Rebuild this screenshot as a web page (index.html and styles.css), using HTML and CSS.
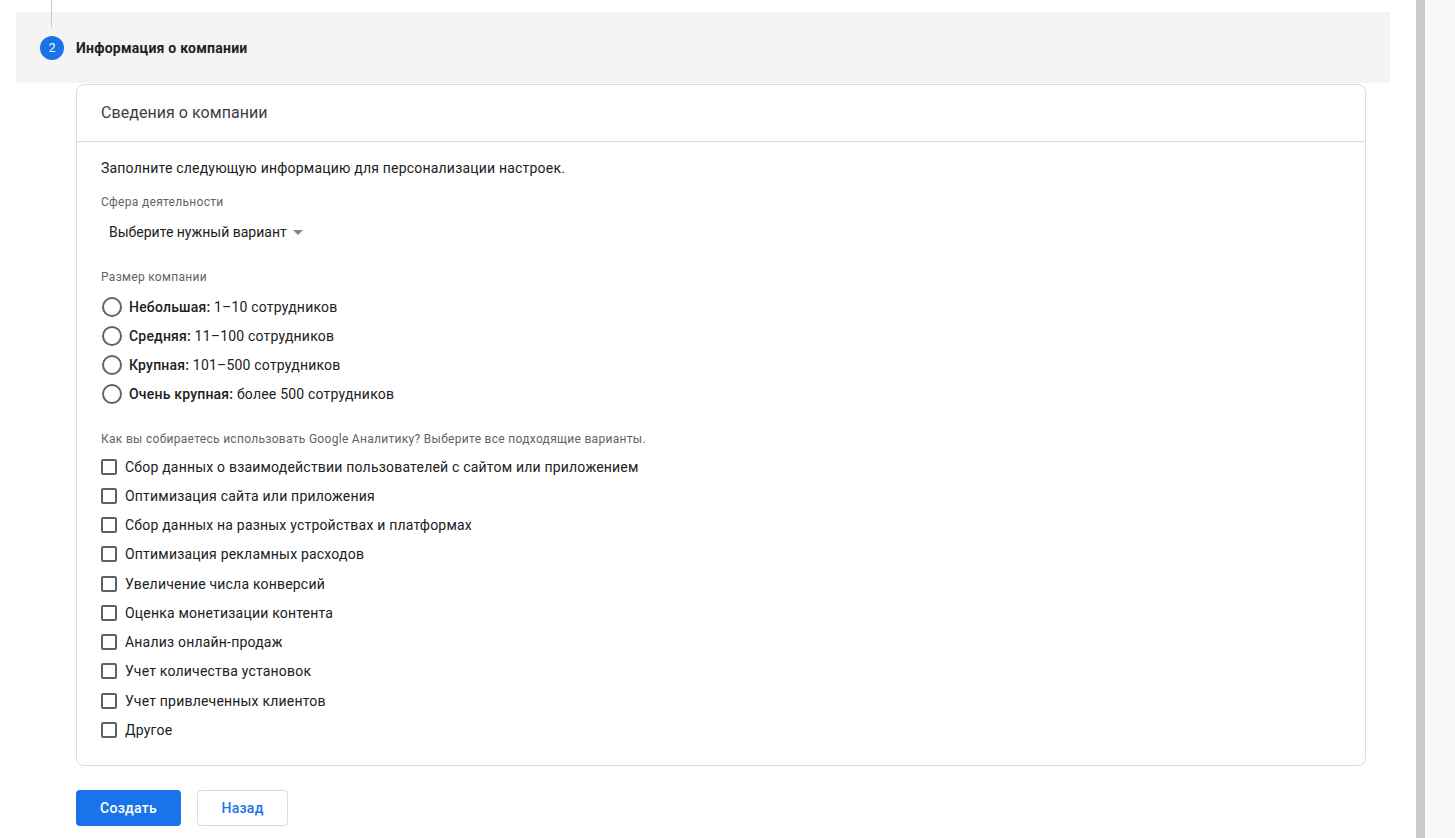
FILE: index.html
```html
<!DOCTYPE html>
<html lang="ru">
<head>
<meta charset="utf-8">
<title>Информация о компании</title>
<link rel="stylesheet" href="styles.css">
</head>
<body>
<div class="layout">
  <main class="main">
    <div class="step-connector"></div>
    <div class="step-header">
      <span class="step-num">2</span>
      <span class="step-title">Информация о компании</span>
    </div>
    <section class="card">
      <div class="card-head">Сведения о компании</div>
      <div class="card-body">
        <p class="intro">Заполните следующую информацию для персонализации настроек.</p>
        <div class="label label-industry">Сфера деятельности</div>
        <div class="select">Выберите нужный вариант <span class="arrow"></span></div>

        <div class="label label-size">Размер компании</div>
        <div class="radios">
          <label class="radio-row"><span class="radio"></span><span><b>Небольшая:</b> 1–10 сотрудников</span></label>
          <label class="radio-row"><span class="radio"></span><span><b>Средняя:</b> 11–100 сотрудников</span></label>
          <label class="radio-row"><span class="radio"></span><span><b>Крупная:</b> 101–500 сотрудников</span></label>
          <label class="radio-row"><span class="radio"></span><span><b>Очень крупная:</b> более 500 сотрудников</span></label>
        </div>

        <div class="label label-use">Как вы собираетесь использовать Google Аналитику? Выберите все подходящие варианты.</div>
        <div class="checks">
          <label class="check-row"><span class="box"></span>Сбор данных о взаимодействии пользователей с сайтом или приложением</label>
          <label class="check-row"><span class="box"></span>Оптимизация сайта или приложения</label>
          <label class="check-row"><span class="box"></span>Сбор данных на разных устройствах и платформах</label>
          <label class="check-row"><span class="box"></span>Оптимизация рекламных расходов</label>
          <label class="check-row"><span class="box"></span>Увеличение числа конверсий</label>
          <label class="check-row"><span class="box"></span>Оценка монетизации контента</label>
          <label class="check-row"><span class="box"></span>Анализ онлайн-продаж</label>
          <label class="check-row"><span class="box"></span>Учет количества установок</label>
          <label class="check-row"><span class="box"></span>Учет привлеченных клиентов</label>
          <label class="check-row"><span class="box"></span>Другое</label>
        </div>
      </div>
    </section>
    <div class="actions">
      <button class="btn btn-primary">Создать</button>
      <button class="btn btn-secondary">Назад</button>
    </div>
  </main>
  <div class="divider"></div>
  <aside class="side"></aside>
</div>
</body>
</html>
```
FILE: styles.css
```css
* { box-sizing: border-box; }
html, body { margin: 0; padding: 0; }
body {
  font-family: Roboto, "Noto Sans", Arial, sans-serif;
  color: #202124;
  background: #fff;
  overflow: hidden;
}
.layout {
  display: flex;
  height: 838px;
}
.main {
  width: 1416px;
  padding: 0 26px 0 16px;
}
.step-connector {
  width: 1px;
  height: 12px;
  margin-left: 35px;
  background: #c8c8c8;
}
.step-header {
  position: relative;
  height: 71px;
  background: #f4f4f4;
  display: flex;
  align-items: center;
  padding-left: 24px;
}
.step-header::before {
  content: "";
  position: absolute;
  left: 35px;
  top: 0;
  width: 1px;
  height: 15px;
  background: #c8c8c8;
}
.step-num {
  width: 24px;
  height: 24px;
  border-radius: 50%;
  background: #1a73e8;
  color: #fff;
  font-size: 12px;
  display: flex;
  align-items: center;
  justify-content: center;
  margin-right: 12px;
}
.step-title {
  font-size: 14px;
  font-weight: 700;
  color: #202124;
  letter-spacing: 0.25px;
}
.card {
  margin: 1px 24px 0 60px;
  border: 1px solid #dadce0;
  border-radius: 8px;
}
.card-head {
  height: 57px;
  padding-left: 24px;
  display: flex;
  align-items: center;
  font-size: 16px;
  color: #3c4043;
  border-bottom: 1px solid #dadce0;
  padding-bottom: 1px;
  letter-spacing: 0.05px;
}
.card-body {
  padding: 16px 24px 20px 24px;
}
.intro {
  margin: 0;
  font-size: 14px;
  line-height: 20px;
  color: #202124;
  letter-spacing: 0.2px;
}
.label {
  font-size: 12px;
  line-height: 16px;
  color: #5f6368;
  letter-spacing: 0.3px;
}
.label-industry { margin-top: 16px; }
.select {
  margin-top: 12px;
  padding-left: 8px;
  font-size: 14px;
  line-height: 20px;
  color: #202124;
  display: flex;
  align-items: center;
}
.arrow {
  display: inline-block;
  width: 0;
  height: 0;
  margin-left: 6px;
  border-left: 5px solid transparent;
  border-right: 5px solid transparent;
  border-top: 5px solid #80868b;
}
.label-size { margin-top: 27px; }
.radios { margin-top: 7px; }
.radio-row {
  display: flex;
  align-items: center;
  height: 29px;
  font-size: 14px;
  color: #202124;
  letter-spacing: 0.2px;
}
.radio-row b { font-weight: 500; }
.radio {
  width: 20px;
  height: 20px;
  border: 2px solid #5f6368;
  border-radius: 50%;
  margin: 0 7px 0 1px;
  flex: none;
}
.label-use { margin-top: 23px; }
.checks { margin-top: 5px; }
.check-row {
  display: flex;
  align-items: center;
  height: 29.25px;
  font-size: 14px;
  color: #202124;
  letter-spacing: 0.2px;
}
.box {
  width: 16px;
  height: 16px;
  border: 2px solid #5f6368;
  border-radius: 2px;
  margin: 0 8px 0 0;
  flex: none;
}
.actions {
  display: flex;
  gap: 16px;
  margin: 24px 0 0 60px;
}
.btn {
  height: 36px;
  border-radius: 4px;
  font-family: Roboto, "Noto Sans", Arial, sans-serif;
  font-size: 14px;
  font-weight: 500;
  letter-spacing: 0.25px;
  cursor: pointer;
}
.btn-primary {
  width: 105px;
  background: #1a73e8;
  color: #fff;
  border: none;
}
.btn-secondary {
  width: 91px;
  background: #fff;
  color: #1a73e8;
  border: 1px solid #dadce0;
}
.divider {
  width: 9px;
  background: #cccccc;
}
.side {
  flex: 1;
  background: #f8f9fa;
}
```
